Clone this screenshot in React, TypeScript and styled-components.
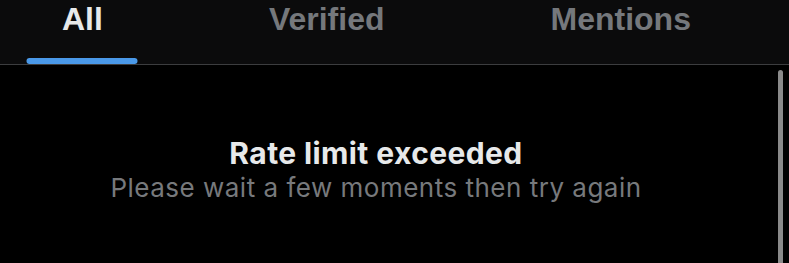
import React from 'react';
import styled, { createGlobalStyle } from 'styled-components';

const GlobalStyle = createGlobalStyle`
  html, body {
    margin: 0;
    padding: 0;
    background: #000;
    overflow: hidden;
  }
`;

const Screen = styled.div`
  position: relative;
  width: 789px;
  height: 263px;
  background: #000;
  display: flex;
  flex-direction: column;
  overflow: hidden;
`;

const TabBar = styled.div`
  display: flex;
  flex-shrink: 0;
  height: 64px;
  background: #0b0b0c;
  border-bottom: 1px solid #3c3d3f;
  padding-left: 62px;
  gap: 166px;
`;

const Tab = styled.div`
  position: relative;
  height: 64px;
`;

const TabLabel = styled.span<{ $active?: boolean }>`
  display: block;
  margin-top: 1px;
  font-family: "Liberation Sans", Arial, sans-serif;
  font-weight: 700;
  font-size: 32px;
  line-height: 36px;
  color: ${(p) => (p.$active ? '#e7e9ea' : '#75787c')};
  white-space: nowrap;
`;

// blue underline sits over the bar's bottom edge
const Indicator = styled.div`
  position: absolute;
  bottom: 0;
  left: 50%;
  transform: translateX(-50%);
  width: 111px;
  height: 6px;
  border-radius: 3px;
  background: #4a99e9;
`;

const Body = styled.div`
  flex: 1;
  display: flex;
  flex-direction: column;
  align-items: center;
  padding-right: 37px;
  padding-top: 71px;
`;

const Title = styled.div`
  font-family: Inter, "Noto Sans", sans-serif;
  font-weight: 700;
  font-size: 30px;
  line-height: 34px;
  letter-spacing: 0.4px;
  color: #e7e9ea;
`;

const Subtitle = styled.div`
  margin-top: 3px;
  font-family: Inter, "Noto Sans", sans-serif;
  font-size: 26px;
  line-height: 30px;
  letter-spacing: 0.5px;
  color: #77797c;
`;

const Scrollbar = styled.div`
  position: absolute;
  right: 6px;
  top: 70px;
  width: 5px;
  height: 200px;
  border-radius: 3px;
  background: #8a8a8a;
`;

const tabs = ['All', 'Verified', 'Mentions'];

export default function App() {
  return (
    <>
      <GlobalStyle />
      <Screen>
        <TabBar>
          {tabs.map((t, i) => (
            <Tab key={t}>
              <TabLabel $active={i === 0}>{t}</TabLabel>
              {i === 0 && <Indicator />}
            </Tab>
          ))}
        </TabBar>
        <Body>
          <Title>Rate limit exceeded</Title>
          <Subtitle>Please wait a few moments then try again</Subtitle>
        </Body>
        <Scrollbar />
      </Screen>
    </>
  );
}
